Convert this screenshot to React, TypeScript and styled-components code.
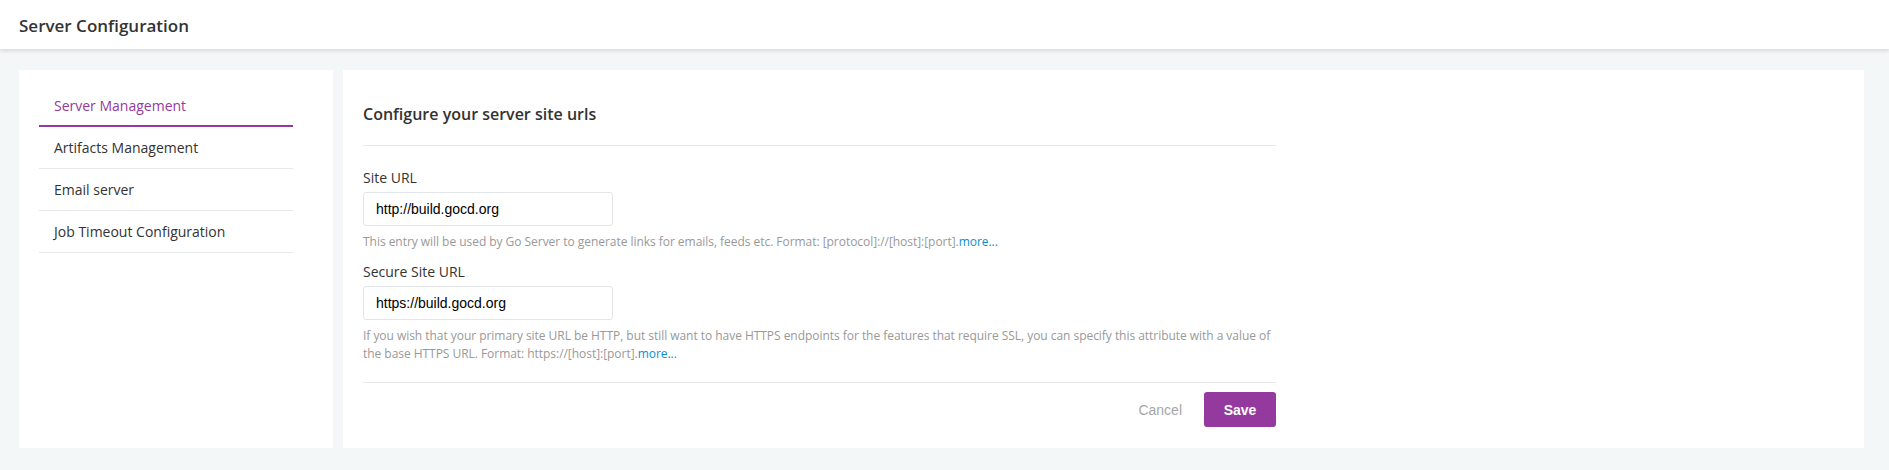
import React from "react";
import styled, { createGlobalStyle } from "styled-components";

const GlobalStyle = createGlobalStyle`
  html, body {
    margin: 0;
    padding: 0;
    background: #f4f7f8;
    font-family: "Open Sans", "Liberation Sans", sans-serif;
    color: #333;
  }
  * { box-sizing: border-box; }
`;

const Page = styled.div`
  width: 1889px;
  height: 470px;
  background: #f4f7f8;
  display: flex;
  flex-direction: column;
`;

const Header = styled.header`
  height: 49px;
  background: #fff;
  box-shadow: 0 2px 4px rgba(0, 0, 0, 0.12);
  display: flex;
  align-items: center;
  padding: 2px 0 0 19px;
  position: relative;
  z-index: 1;
`;

const Title = styled.h1`
  margin: 0;
  font-size: 17px;
  font-weight: 600;
  color: #333;
`;

const Body = styled.div`
  flex: 1;
  display: flex;
  gap: 10px;
  padding: 21px 25px 22px 19px;
`;

const Sidebar = styled.nav`
  width: 314px;
  background: #fff;
  padding: 15px 40px 0 20px;
`;

const NavList = styled.ul`
  list-style: none;
  margin: 0;
  padding: 0;
`;

const NavItem = styled.li<{ $active?: boolean }>`
  height: 42px;
  display: flex;
  align-items: center;
  padding: 0 15px;
  font-size: 14px;
  color: ${(p) => (p.$active ? "#943a9e" : "#333")};
  border-bottom: ${(p) => (p.$active ? "2px solid #943a9e" : "1px solid #e6e8ea")};
`;

const Main = styled.main`
  flex: 1;
  background: #fff;
  padding: 20px;
`;

const Form = styled.div`
  width: 913px;
  display: flex;
  flex-direction: column;
`;

const Heading = styled.h2`
  margin: 0;
  padding: 12px 0 19px;
  font-size: 16px;
  line-height: 24px;
  font-weight: 600;
  color: #333;
  border-bottom: 1px solid #e6e8ea;
`;

const Fields = styled.div`
  padding-top: 22px;
  display: flex;
  flex-direction: column;
  gap: 11px;
`;

const Field = styled.div`
  display: flex;
  flex-direction: column;
`;

const Label = styled.label`
  font-size: 14px;
  line-height: 20px;
  color: #333;
  margin-bottom: 4px;
`;

const Input = styled.input`
  width: 250px;
  height: 34px;
  border: 1px solid #e3e6e8;
  border-radius: 3px;
  padding: 0 12px;
  font-family: "Liberation Sans", Arial, sans-serif;
  font-size: 14px;
  color: #000;
  background: #fff;
  outline: none;
`;

const Help = styled.p`
  margin: 7px 0 0;
  font-size: 12px;
  line-height: 18px;
  letter-spacing: -0.04px;
  color: #999;
`;

const More = styled.a`
  color: #0a8ed3;
  text-decoration: none;
`;

const Footer = styled.div`
  margin-top: 19px;
  border-top: 1px solid #e6e8ea;
  padding-top: 9px;
  display: flex;
  justify-content: flex-end;
  align-items: center;
  gap: 22px;
`;

const CancelButton = styled.button`
  border: none;
  background: none;
  font-family: "Liberation Sans", Arial, sans-serif;
  font-size: 14px;
  color: #a6a6a6;
  padding: 0;
  cursor: pointer;
`;

const SaveButton = styled.button`
  width: 72px;
  height: 35px;
  border: none;
  border-radius: 3px;
  background: #943a9e;
  color: #fff;
  font-family: "Liberation Sans", Arial, sans-serif;
  font-size: 14px;
  font-weight: 700;
  cursor: pointer;
`;

export default function App() {
  return (
    <>
      <GlobalStyle />
      <Page>
        <Header>
          <Title>Server Configuration</Title>
        </Header>
        <Body>
          <Sidebar>
            <NavList>
              <NavItem $active>Server Management</NavItem>
              <NavItem>Artifacts Management</NavItem>
              <NavItem>Email server</NavItem>
              <NavItem>Job Timeout Configuration</NavItem>
            </NavList>
          </Sidebar>
          <Main>
            <Form>
              <Heading>Configure your server site urls</Heading>
              <Fields>
                <Field>
                  <Label>Site URL</Label>
                  <Input defaultValue="http://build.gocd.org" />
                  <Help>
                    This entry will be used by Go Server to generate links for emails, feeds etc. Format:
                    [protocol]://[host]:[port].<More href="#">more...</More>
                  </Help>
                </Field>
                <Field>
                  <Label>Secure Site URL</Label>
                  <Input defaultValue="https://build.gocd.org" />
                  <Help>
                    If you wish that your primary site URL be HTTP, but still want to have HTTPS endpoints for the
                    features that require SSL, you can specify this attribute with a value of the base HTTPS URL.
                    Format: https://[host]:[port].<More href="#">more...</More>
                  </Help>
                </Field>
              </Fields>
              <Footer>
                <CancelButton>Cancel</CancelButton>
                <SaveButton>Save</SaveButton>
              </Footer>
            </Form>
          </Main>
        </Body>
      </Page>
    </>
  );
}
